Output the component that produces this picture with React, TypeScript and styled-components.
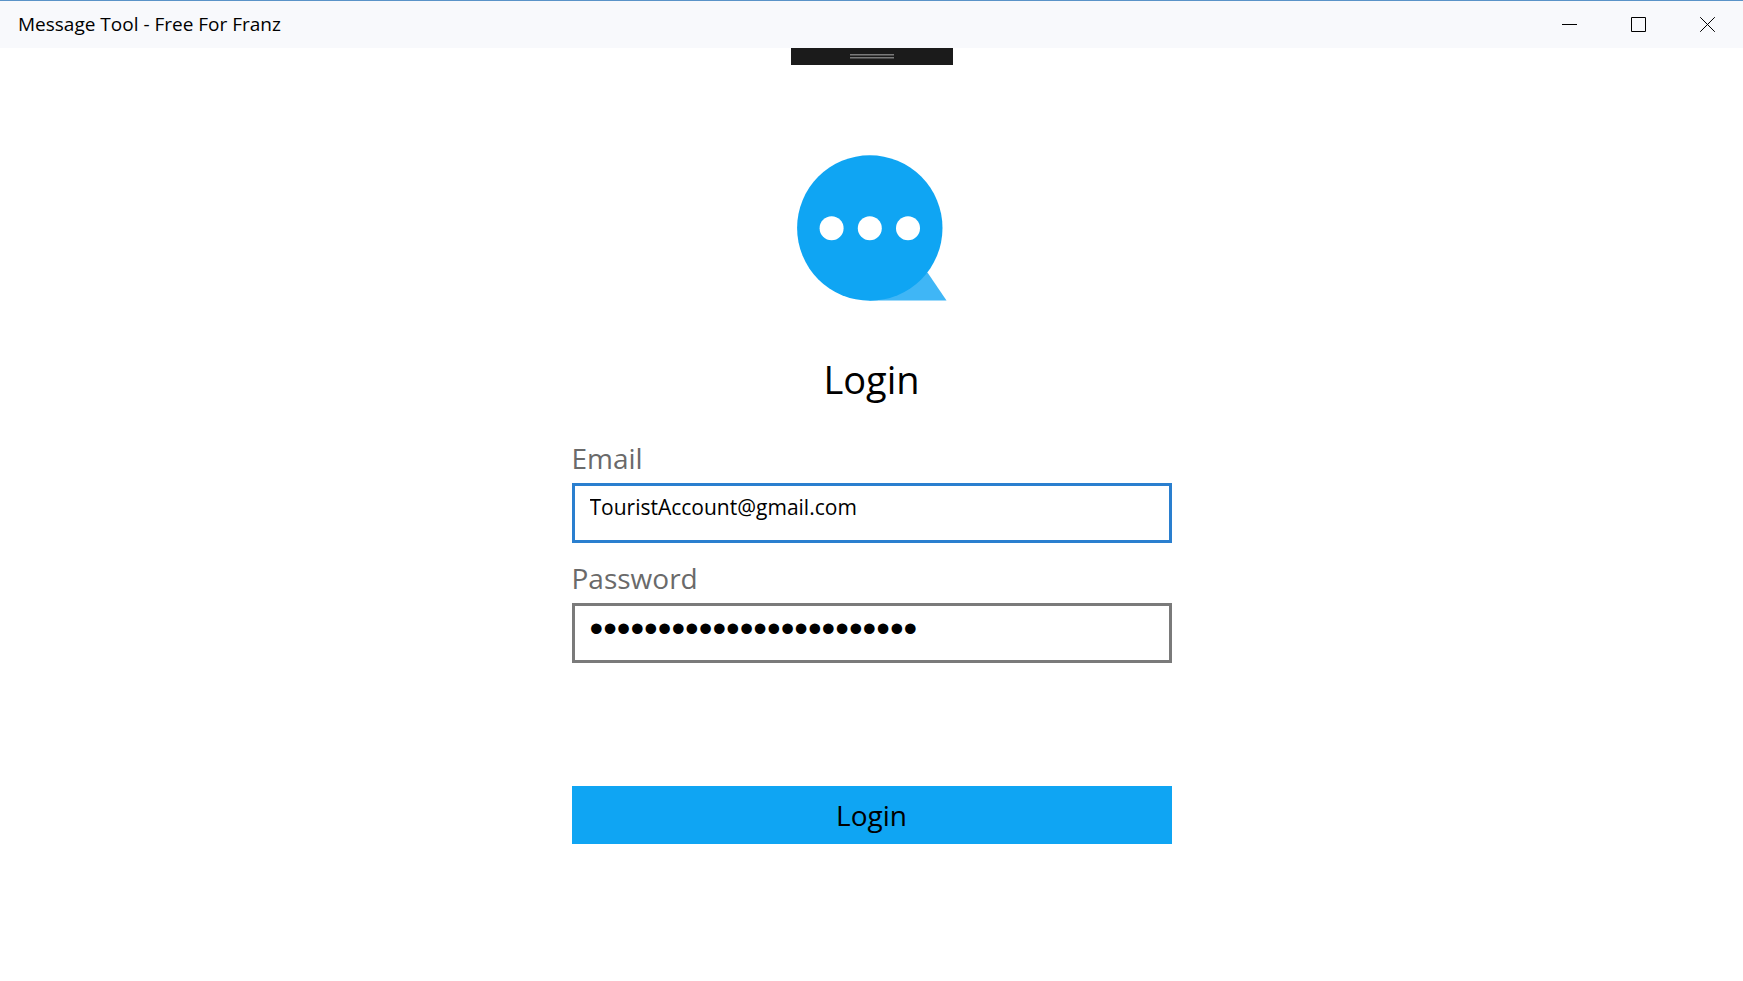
import React, { useState } from "react";
import styled, { createGlobalStyle } from "styled-components";

const GlobalStyle = createGlobalStyle`
  *, *::before, *::after { box-sizing: border-box; }
  body {
    margin: 0;
    background: #ffffff;
    color: #000000;
    font-family: "Segoe UI", "Open Sans", "Noto Sans", sans-serif;
  }
  button, input { font-family: inherit; color: inherit; }
`;

const Window = styled.div`
  display: flex;
  flex-direction: column;
  min-height: 100vh;
`;

const TitleBar = styled.header`
  display: flex;
  align-items: stretch;
  justify-content: space-between;
  height: 48px;
  padding-right: 1px;
  border-top: 1px solid #5a93c8;
  background: #f8f9fc;
`;

const WindowTitle = styled.span`
  padding-left: 18px;
  font-size: 19px;
  line-height: 47px;
  white-space: nowrap;
`;

const WindowControls = styled.div`
  display: flex;
`;

const ControlButton = styled.button`
  display: flex;
  align-items: center;
  justify-content: center;
  width: 69px;
  padding: 0;
  border: 0;
  background: transparent;
`;

const Content = styled.main`
  display: flex;
  flex-direction: column;
  align-items: center;
  flex: 1;
`;

const ToolbarHandle = styled.button`
  display: flex;
  flex-direction: column;
  align-items: center;
  justify-content: center;
  gap: 1px;
  width: 162px;
  height: 17px;
  padding: 0;
  border: 0;
  background: #1b1b1b;
`;

const GripLine = styled.span`
  width: 44px;
  height: 2px;
  border-top: 1px solid #7a7a7a;
  background: #4a4a4a;
`;

const Logo = styled.svg`
  display: block;
  margin-top: 90px;
`;

const Heading = styled.h1`
  margin: 54px 0 37px;
  font-size: 38px;
  font-weight: 400;
  line-height: 48px;
`;

const LoginForm = styled.form`
  display: flex;
  flex-direction: column;
  width: 100%;
  max-width: 600px;
`;

const Field = styled.div`
  display: flex;
  flex-direction: column;
  gap: 7px;
  margin-bottom: 17px;
`;

const FieldLabel = styled.label`
  color: #6a6a6a;
  font-size: 28px;
  line-height: 36px;
`;

const FieldInput = styled.input<{ $active?: boolean }>`
  width: 100%;
  height: 60px;
  padding: 7px 15px 19px;
  border: 3px solid ${({ $active }) => ($active ? "#2a7fcf" : "#7a7a7a")};
  border-radius: 0;
  outline: 0;
  background: #ffffff;
  font-size: 21px;
  line-height: 28px;
`;

const PasswordInput = styled(FieldInput)`
  padding-top: 9px;
  padding-bottom: 17px;
  font-family: "Liberation Sans", Arial, sans-serif;
  font-size: 39px;
`;

const SubmitButton = styled.button`
  height: 58px;
  margin-top: 106px;
  padding: 0;
  border: 0;
  background: #0fa5f3;
  font-size: 28px;
  line-height: 36px;
`;

export default function App() {
  const [email, setEmail] = useState("TouristAccount@gmail.com");
  const [password, setPassword] = useState("touristaccountpassword24");
  const [active, setActive] = useState("email");

  return (
    <Window>
      <GlobalStyle />
      <TitleBar>
        <WindowTitle>Message Tool - Free For Franz</WindowTitle>
        <WindowControls>
          <ControlButton type="button" aria-label="Minimize">
            <svg width="15" height="15" viewBox="0 0 15 15" fill="none" stroke="#000">
              <path d="M0 7.5H15" />
            </svg>
          </ControlButton>
          <ControlButton type="button" aria-label="Maximize">
            <svg width="15" height="15" viewBox="0 0 15 15" fill="none" stroke="#000">
              <path d="M0.5 0.5H14.5V14.5H0.5Z" />
            </svg>
          </ControlButton>
          <ControlButton type="button" aria-label="Close">
            <svg width="15" height="15" viewBox="0 0 15 15" fill="none" stroke="#000">
              <path d="M0.2 0.2L14.8 14.8M14.8 0.2L0.2 14.8" />
            </svg>
          </ControlButton>
        </WindowControls>
      </TitleBar>
      <Content>
        <ToolbarHandle type="button" aria-label="Expand toolbar">
          <GripLine />
          <GripLine />
        </ToolbarHandle>
        <Logo width="150" height="146" viewBox="0 0 150 146" aria-hidden="true">
          <path d="M72 145.5L130.5 117.5L149.5 145.5Z" fill="#3fb6f6" />
          <circle cx="72.8" cy="73" r="72.7" fill="#0fa5f3" />
          <circle cx="34.6" cy="73.2" r="12" fill="#fff" />
          <circle cx="72.8" cy="73.2" r="12" fill="#fff" />
          <circle cx="111" cy="73.2" r="12" fill="#fff" />
        </Logo>
        <Heading>Login</Heading>
        <LoginForm onSubmit={(e) => e.preventDefault()}>
          <Field>
            <FieldLabel htmlFor="email">Email</FieldLabel>
            <FieldInput
              id="email"
              type="text"
              value={email}
              $active={active === "email"}
              onFocus={() => setActive("email")}
              onChange={(e) => setEmail(e.target.value)}
            />
          </Field>
          <Field>
            <FieldLabel htmlFor="password">Password</FieldLabel>
            <PasswordInput
              id="password"
              type="password"
              value={password}
              $active={active === "password"}
              onFocus={() => setActive("password")}
              onChange={(e) => setPassword(e.target.value)}
            />
          </Field>
          <SubmitButton type="submit">Login</SubmitButton>
        </LoginForm>
      </Content>
    </Window>
  );
}
